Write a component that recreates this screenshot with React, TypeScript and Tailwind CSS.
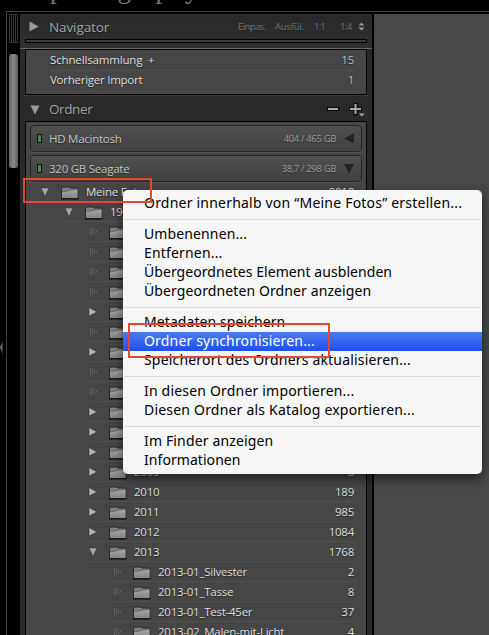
import clsx from 'clsx'

type Arrow = 'open' | 'closed' | 'empty'
type Folder = { name?: string; count?: string; level: number; arrow: Arrow }

const folders: Folder[] = [
  { name: 'Meine Fotos', count: '9010', level: 0, arrow: 'open' },
  { name: '19', level: 1, arrow: 'open' },
  { level: 2, arrow: 'empty' },
  { level: 2, arrow: 'empty' },
  { level: 2, arrow: 'empty' },
  { level: 2, arrow: 'empty' },
  { level: 2, arrow: 'closed' },
  { level: 2, arrow: 'empty' },
  { level: 2, arrow: 'closed' },
  { level: 2, arrow: 'empty' },
  { level: 2, arrow: 'empty' },
  { level: 2, arrow: 'closed' },
  { level: 2, arrow: 'closed' },
  { level: 2, arrow: 'closed' },
  { name: '2009', count: '8', level: 2, arrow: 'closed' },
  { name: '2010', count: '189', level: 2, arrow: 'closed' },
  { name: '2011', count: '985', level: 2, arrow: 'closed' },
  { name: '2012', count: '1084', level: 2, arrow: 'closed' },
  { name: '2013', count: '1768', level: 2, arrow: 'open' },
  { name: '2013-01_Silvester', count: '2', level: 3, arrow: 'empty' },
  { name: '2013-01_Tasse', count: '8', level: 3, arrow: 'empty' },
  { name: '2013-01_Test-45er', count: '37', level: 3, arrow: 'empty' },
  { name: '2013-02_Malen-mit-Licht', count: '4', level: 3, arrow: 'empty' },
]

const indents = ['pl-[14px]', 'pl-[38px]', 'pl-[62px]', 'pl-[86px]']

const menuGroups = [
  [{ label: 'Ordner innerhalb von “Meine Fotos” erstellen...', tracking: 'tracking-[0.21px]' }],
  [
    { label: 'Umbenennen...', tracking: 'tracking-[0.12px]' },
    { label: 'Entfernen...', tracking: 'tracking-[0.17px]' },
    { label: 'Übergeordnetes Element ausblenden', tracking: 'tracking-[0.06px]' },
    { label: 'Übergeordneten Ordner anzeigen', tracking: 'tracking-[0.11px]' },
  ],
  [
    { label: 'Metadaten speichern', tracking: 'tracking-[0.08px]' },
    { label: 'Ordner synchronisieren...', tracking: 'tracking-[0.17px]', active: true },
    { label: 'Speicherort des Ordners aktualisieren...', tracking: 'tracking-[0.18px]' },
  ],
  [
    { label: 'In diesen Ordner importieren...', tracking: 'tracking-[0.19px]' },
    { label: 'Diesen Ordner als Katalog exportieren...', tracking: 'tracking-[0.2px]' },
  ],
  [
    { label: 'Im Finder anzeigen', tracking: 'tracking-[0.15px]' },
    { label: 'Informationen', tracking: 'tracking-[0.06px]' },
  ],
]

function FolderIcon() {
  return (
    <svg width="18" height="14" viewBox="0 0 18 14" className="shrink-0">
      <defs>
        <linearGradient id="folder" x1="0" y1="0" x2="0" y2="1">
          <stop offset="0" stopColor="#a6a6a6" />
          <stop offset="1" stopColor="#858585" />
        </linearGradient>
      </defs>
      <path d="M.5 13V2.5Q.5 1 2 1h5.500q1 0 1.500 1h6.500q1.500 0 1.500 1.500V13z" fill="#808080" stroke="#272727" />
      <path d="M1 5.500q4 .2 7-1.200Q10 3.500 16.500 3.500V12H1z" fill="url(#folder)" />
      <path d="M1 5.500q4 .2 7-1.200Q10 3.500 16.500 3.500" fill="none" stroke="#555" strokeWidth=".7" />
      <path d="M0 12.700h17.500" stroke="#171717" strokeWidth="1.300" />
    </svg>
  )
}

function RowArrow({ kind }: { kind: Arrow }) {
  return (
    <svg width="10" height="10" viewBox="0 0 10 10" className="shrink-0">
      {kind === 'open' && <path d="M1 1h8L5 9.500z" fill="#a5a5a5" stroke="#2c2c2c" strokeWidth=".5" />}
      {kind === 'closed' && <path d="M1 .5L9 5 1 9z" fill="#b4b4b4" stroke="#2c2c2c" strokeWidth=".5" />}
      {kind === 'empty' && (
        <path
          d="M2 1.500h1M2 3.500h1M2 5.500h1M2 7.500h1M4 2.500h1M4 4.500h1M4 6.500h1M6 3.500h1M6 5.500h1M8 4.500h1"
          stroke="#777"
          strokeWidth="1"
        />
      )}
    </svg>
  )
}

function FolderRow({ folder }: { folder: Folder }) {
  return (
    <div className={clsx('flex h-5 shrink-0 pr-[9px]', indents[folder.level])}>
      <div className={clsx('flex min-w-0 grow items-center border-b pr-[3px]', folder.level > 0 ? 'border-[#505050]' : 'border-transparent')}>
        <RowArrow kind={folder.arrow} />
        <span className="mt-[2px] ml-[11px] flex">
          <FolderIcon />
        </span>
        {folder.name && <span className="mt-px ml-[7px] grow whitespace-nowrap">{folder.name}</span>}
        {folder.count && <span className="mt-px">{folder.count}</span>}
      </div>
    </div>
  )
}

function Volume({ name, size, open }: { name: string; size: string; open?: boolean }) {
  return (
    <div className="mx-1 flex h-[27px] shrink-0 items-center rounded-[4px] border border-[#242424] bg-linear-to-b from-[#505050] to-[#414141] pr-[7px] pl-[6px] text-[#c2c2c2] shadow-[0_1px_0_#555]">
      <span className="h-[9px] w-[5px] border border-[#111] bg-[#438a4b]" />
      <span className="mt-px ml-[7px] grow">{name}</span>
      <span className="mt-px mr-2 text-[9.5px] tracking-[-0.35px] text-[#a0a0a0]">{size}</span>
      <svg width="10" height="11" viewBox="0 0 10 11">
        <path d={open ? 'M0 1h10L5 10.500z' : 'M10 .5v10L0 5.500z'} fill="#222" />
      </svg>
    </div>
  )
}

function SidePanel() {
  return (
    <div className="flex w-[352px] shrink-0 flex-col bg-[#2a2a2a] [text-shadow:0_1px_1px_rgba(0,0,0,0.45)]">
      {/* Navigator */}
      <div className="flex h-[35px] shrink-0 flex-col border-b border-[#666] bg-linear-to-b from-[#292929] to-[#303030] px-[5px]">
        <div className="flex h-[25px] items-center pl-1 text-[9.5px] text-[#777]">
          <svg width="10" height="11" viewBox="0 0 10 11">
            <path d="M.5.500L9.500 5.500l-9 5z" fill="#9a9a9a" />
          </svg>
          <span className="mt-[2px] ml-[10px] grow text-[13.5px] tracking-[-0.1px] text-[#a4a4a4]">Navigator</span>
          <span className="w-[37px] tracking-[-0.6px]">Einpas.</span>
          <span className="w-[39px] tracking-[-0.2px]">Ausfül.</span>
          <span className="w-[26px] tracking-[-0.8px]">1:1</span>
          <span className="w-[18px] tracking-[-0.6px]">1:4</span>
          <svg width="7" height="9" viewBox="0 0 7 9" className="mr-[2px]">
            <path d="M.5 3.500h6L3.500.500zM.5 5.500h6l-3 3z" fill="#999" />
          </svg>
        </div>
        <div className="h-1 border border-black bg-[#3c3c3c]" />
      </div>

      {/* Katalog */}
      <div className="mx-[5px] h-[46px] shrink-0 border border-black bg-[#464646] pr-[12px] pl-[24px] shadow-[0_1px_0_#3c3c3c]">
        <div className="flex h-[21px] items-center justify-between border-b border-[#505050]">
          <span className="tracking-[-0.15px]">Schnellsammlung&nbsp; +</span>
          <span className="text-[#bbb]">15</span>
        </div>
        <div className="flex h-[18px] items-center justify-between">
          <span>Vorheriger Import</span>
          <span className="text-[#bbb]">1</span>
        </div>
      </div>

      {/* Ordner */}
      <div className="flex h-[26px] shrink-0 items-center pr-[7px] pl-[10px]">
        <svg width="10" height="10" viewBox="0 0 10 10" className="mt-[3px]">
          <path d="M.5.500h9L5 9.500z" fill="#999" />
        </svg>
        <span className="mt-[3px] ml-[9px] grow text-[13.5px] tracking-[-0.4px] text-[#a4a4a4]">Ordner</span>
        <svg width="38" height="16" viewBox="0 0 38 16" className="mt-[3px]">
          <path d="M0 7h12.500M22 7h13M28.500 1v12.500" stroke="#090909" strokeWidth="4" />
          <path d="M1 7h10M23 7h11M28.500 2v10" stroke="#aaa" strokeWidth="2" />
          <path d="M32 11.500h5.500l-2.750 3z" fill="#aaa" />
        </svg>
      </div>
      <div className="mx-[5px] flex min-h-0 grow flex-col border border-b-0 border-black bg-[#464646] pt-[3px]">
        <Volume name="HD Macintosh" size="404 / 465 GB" />
        <div className="h-[3px] shrink-0" />
        <Volume name="320 GB Seagate" size="38,7 / 298 GB" open />
        {folders.map((folder, i) => (
          <FolderRow key={i} folder={folder} />
        ))}
      </div>
    </div>
  )
}

function ContextMenu() {
  return (
    <div className="absolute top-[190px] left-[123px] w-[359px] rounded-[5px] bg-[#f6f6f6] py-1 font-['Noto_Sans',sans-serif] text-[14px] text-black shadow-[0_5px_12px_rgba(0,0,0,0.55)]">
      {menuGroups.map((group, i) => (
        <div key={i}>
          {i > 0 && (
            <div className="flex h-3 items-center px-px">
              <div className="h-px grow bg-[#d9d9d9]" />
            </div>
          )}
          {group.map((item) => (
            <div
              key={item.label}
              className={clsx(
                'h-[19px] pl-[21px] leading-[18px] whitespace-nowrap',
                item.tracking,
                'active' in item && 'bg-linear-to-b from-[#4d78ee] to-[#1d50ee] text-white',
              )}
            >
              {item.label}
            </div>
          ))}
        </div>
      ))}
    </div>
  )
}

export default function App() {
  return (
    <div className="relative flex h-[635px] w-[489px] flex-col overflow-hidden bg-black font-['Open_Sans','Noto_Sans',sans-serif] text-[11.5px] leading-none tracking-[-0.25px] text-[#dedede]">
      <div className="flex h-[11px] shrink-0 items-end overflow-hidden pl-[50px]">
        <span className="mb-[8px] font-['Liberation_Serif',serif] text-[27px] leading-[27px] tracking-[1.2px] text-[#777]">photography</span>
      </div>
      <div className="flex min-h-0 grow">
        <div className="flex w-[6px] shrink-0 items-center pt-[49px]">
          <svg width="3" height="13" viewBox="0 0 3 13">
            <path d="M2.500 0v13L0 6.500z" fill="#666" />
          </svg>
        </div>
        <div className="flex min-w-0 grow border-t border-l border-[#404040] pt-[2px]">
          {/* Scrollbar */}
          <div className="flex w-[13px] shrink-0 flex-col px-[2px]">
            <div className="flex h-[29px] justify-between border border-[#333] px-px">
              <span className="w-px bg-[#383838]" />
              <span className="w-px bg-[#383838]" />
              <span className="w-px bg-[#383838]" />
            </div>
            <div className="mt-[11px] h-[114px] rounded-[3px] bg-linear-to-r from-[#656565] via-[#888] to-[#5e5e5e]" />
          </div>
          <SidePanel />
          <div className="ml-[2px] grow bg-[#484848]" />
        </div>
      </div>

      <ContextMenu />

      {/* Markierungen */}
      <div className="absolute top-[178px] left-[23px] h-[25px] w-[129px] border-2 border-[#e6482b]" />
      <div className="absolute top-[323px] left-[128px] h-[35px] w-[202px] border-2 border-[#e6482b]" />
    </div>
  )
}
